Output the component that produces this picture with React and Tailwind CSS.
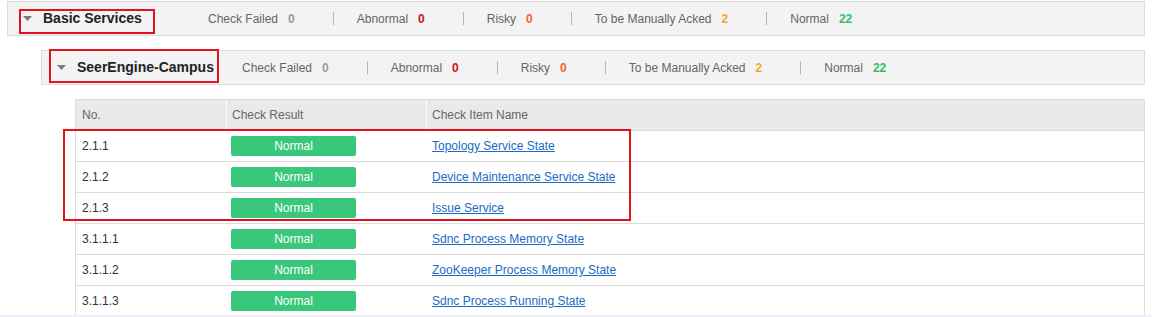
const stats = [
  { label: 'Check Failed', value: '0', color: 'text-[#9a9a9a]' },
  { label: 'Abnormal', value: '0', color: 'text-[#d0101b]' },
  { label: 'Risky', value: '0', color: 'text-[#f7662b]' },
  { label: 'To be Manually Acked', value: '2', color: 'text-[#f5a623]' },
  { label: 'Normal', value: '22', color: 'text-[#2fbf6c]' },
]

const rows = [
  { no: '2.1.1', name: 'Topology Service State' },
  { no: '2.1.2', name: 'Device Maintenance Service State' },
  { no: '2.1.3', name: 'Issue Service' },
  { no: '3.1.1.1', name: 'Sdnc Process Memory State' },
  { no: '3.1.1.2', name: 'ZooKeeper Process Memory State' },
  { no: '3.1.1.3', name: 'Sdnc Process Running State' },
]

function Arrow() {
  return (
    <svg width="9" height="5" viewBox="0 0 9 5" className="shrink-0">
      <path d="M0 0 L9 0 L4.5 5 Z" fill="#7a7a7a" />
    </svg>
  )
}

function SummaryBar({ title }) {
  return (
    <div className="h-[35px] flex items-center pl-[15px] bg-[#f3f3f3] border border-[#dcdcdc]">
      <Arrow />
      <div className="ml-[11px] w-[165px] shrink-0 text-[14px] font-bold text-[#222]">{title}</div>
      <div className="flex items-center text-[12px]">
        {stats.map((s, i) => (
          <div key={s.label} className="flex items-center">
            {i > 0 && <span className="ml-[38px] mr-[23px] w-px h-[13px] bg-[#b5b5b5]" />}
            <span className="text-[#666]">{s.label}</span>
            <span className={`ml-[10px] font-bold ${s.color}`}>{s.value}</span>
          </div>
        ))}
      </div>
    </div>
  )
}

export default function App() {
  return (
    <div className="w-full h-[317px] bg-[#eef2f8] font-['Liberation_Sans',Arial,sans-serif]">
      <div className="relative h-[315px] overflow-hidden bg-white pt-px px-[7px]">
        <SummaryBar title="Basic Services" />
        <div className="mt-[14px] ml-[34px]">
          <SummaryBar title="SeerEngine-Campus" />
        </div>

        <div className="mt-[14px] ml-[68px] border-t border-l border-r border-[#dcdcdc] text-[12px]">
          <div className="grid grid-cols-[150px_200px_1fr] h-[31px] bg-[#eaeaea] border-b border-[#dcdcdc] text-[#666]">
            <div className="flex items-center pl-[6px]">No.</div>
            <div className="flex items-center pl-[5px] border-l border-white">Check Result</div>
            <div className="flex items-center pl-[5px] border-l border-white">Check Item Name</div>
          </div>
          {rows.map((r) => (
            <div key={r.no} className="grid grid-cols-[150px_200px_1fr] h-[31px] border-b border-[#dcdcdc] text-[#333]">
              <div className="flex items-center pl-[6px]">{r.no}</div>
              <div className="flex items-center pl-[4px] border-l border-transparent">
                <span className="w-[125px] h-[20px] rounded-[2px] bg-[#38c77b] text-white flex items-center justify-center">
                  Normal
                </span>
              </div>
              <div className="flex items-center pl-[5px] border-l border-transparent">
                <a className="text-[#1a6cc4] underline cursor-pointer">{r.name}</a>
              </div>
            </div>
          ))}
        </div>

        <div className="absolute left-[19px] top-[9px] w-[136px] h-[25px] border-2 border-[#e3121d]" />
        <div className="absolute left-[49px] top-[49px] w-[170px] h-[34px] border-2 border-[#e3121d]" />
        <div className="absolute left-[63px] top-[129px] w-[568px] h-[92px] border-2 border-[#e3121d]" />
      </div>
    </div>
  )
}
